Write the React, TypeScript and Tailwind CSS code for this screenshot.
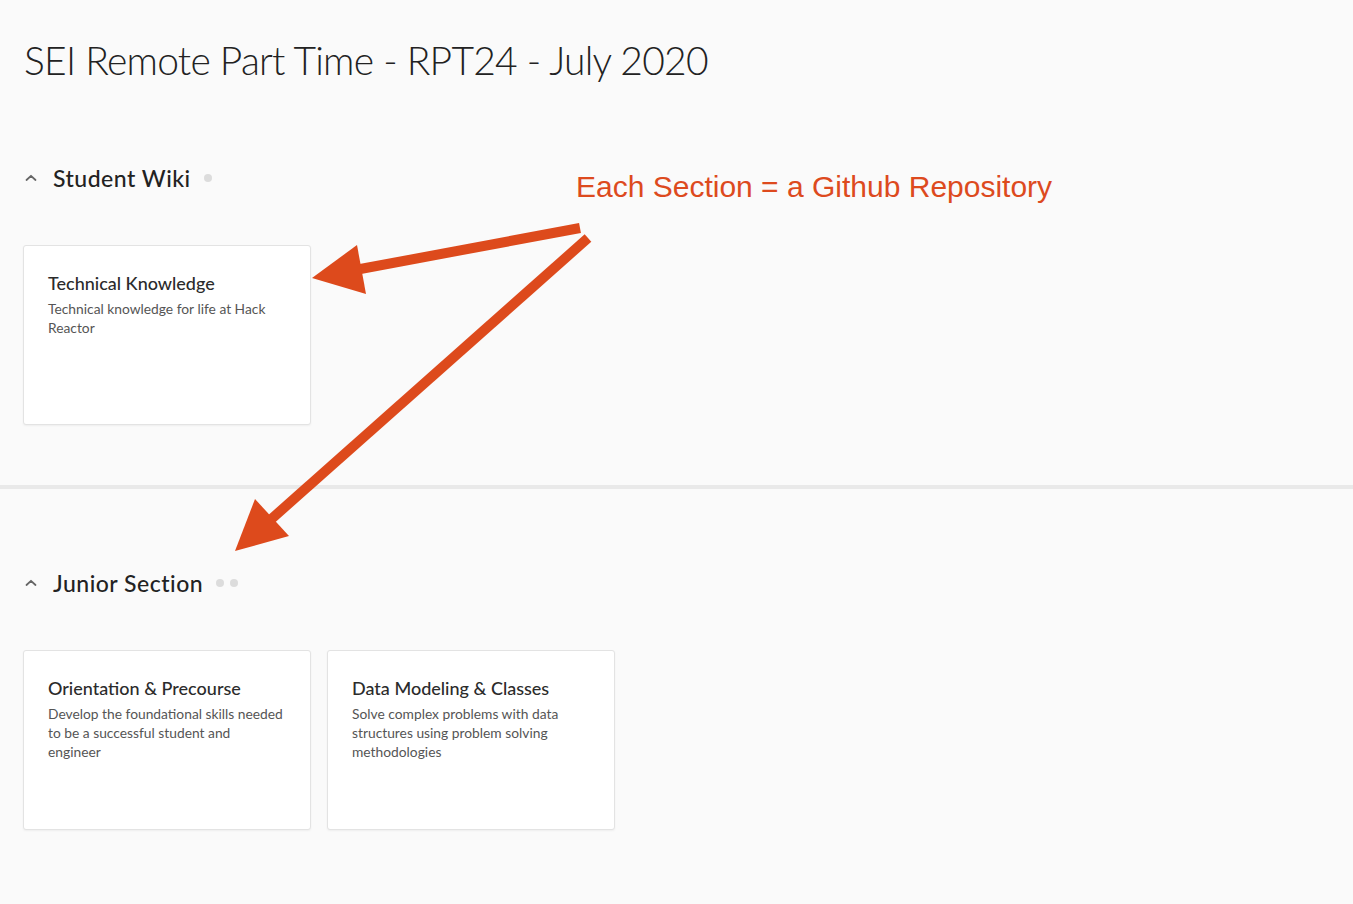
import React from "react";

const font = { fontFamily: "Lato, 'Open Sans', sans-serif" };

function Chevron() {
  return (
    <svg width="14" height="10" viewBox="0 0 14 10" className="shrink-0">
      <path d="M2.5 7 L7 2.8 L11.5 7" fill="none" stroke="#666" strokeWidth="1.8" strokeLinecap="round" strokeLinejoin="round" />
    </svg>
  );
}

function Card({ title, desc }: { title: string; desc: string }) {
  return (
    <div className="w-[288px] h-[180px] bg-white border border-[#e3e3e3] rounded-[3px] shadow-[0_1px_2px_rgba(0,0,0,0.05)] pl-6 pr-[26px] pt-[25px]">
      <div className="text-[18px] leading-[24px] text-[#2b2b2b] font-medium">{title}</div>
      <div className="mt-[4px] text-[13.8px] leading-[19px] text-[#555]">{desc}</div>
    </div>
  );
}

function Section({ title, dots, children }: { title: string; dots: number; children: React.ReactNode }) {
  return (
    <div className="px-[23px]">
      <div className="flex items-center h-[30px]">
        <span className="ml-[1px]">
          <Chevron />
        </span>
        <span className="ml-[15px] text-[23px] text-[#222] font-medium tracking-[0.5px]">{title}</span>
        <span className="ml-[13px] flex gap-[6px]">
          {Array.from({ length: dots }).map((_, i) => (
            <span key={i} className="block w-[8px] h-[8px] rounded-full bg-[#dcdcdc]" />
          ))}
        </span>
      </div>
      <div className="mt-[52px] flex gap-4">{children}</div>
    </div>
  );
}

export default function App() {
  return (
    <div className="relative w-[1353px] h-[904px] bg-[#fafafa] overflow-hidden" style={font}>
      <div className="px-6 pt-[36px]">
        <h1 className="text-[39px] leading-[48px] font-light text-[#222] tracking-[-0.75px]">
          SEI Remote Part Time - RPT24 - July 2020
        </h1>
      </div>
      <div className="pt-[79px]">
        <Section title="Student Wiki" dots={1}>
          <Card title="Technical Knowledge" desc="Technical knowledge for life at Hack Reactor" />
        </Section>
      </div>
      <div className="mt-[60px] h-[4px] bg-[#e9e9e9]" />
      <div className="pt-[79px]">
        <Section title="Junior Section" dots={2}>
          <Card title="Orientation & Precourse" desc="Develop the foundational skills needed to be a successful student and engineer" />
          <Card title="Data Modeling & Classes" desc="Solve complex problems with data structures using problem solving methodologies" />
        </Section>
      </div>

      <div
        className="absolute left-[576px] top-[168px] text-[30px] leading-[38px] text-[#dd4a1e] whitespace-nowrap"
        style={{ fontFamily: "'Liberation Sans', Arial, sans-serif" }}
      >
        Each Section = a Github Repository
      </div>

      <svg className="absolute left-0 top-0 pointer-events-none" width="1353" height="904" viewBox="0 0 1353 904">
        <line x1="580" y1="228" x2="355" y2="270" stroke="#dd4a1c" strokeWidth="10" />
        <polygon points="312,278 357,245 366,294" fill="#dd4a1c" />
        <line x1="588" y1="238" x2="268" y2="522" stroke="#dd4a1c" strokeWidth="10" />
        <polygon points="235,551 255,499 289,536" fill="#dd4a1c" />
      </svg>
    </div>
  );
}
